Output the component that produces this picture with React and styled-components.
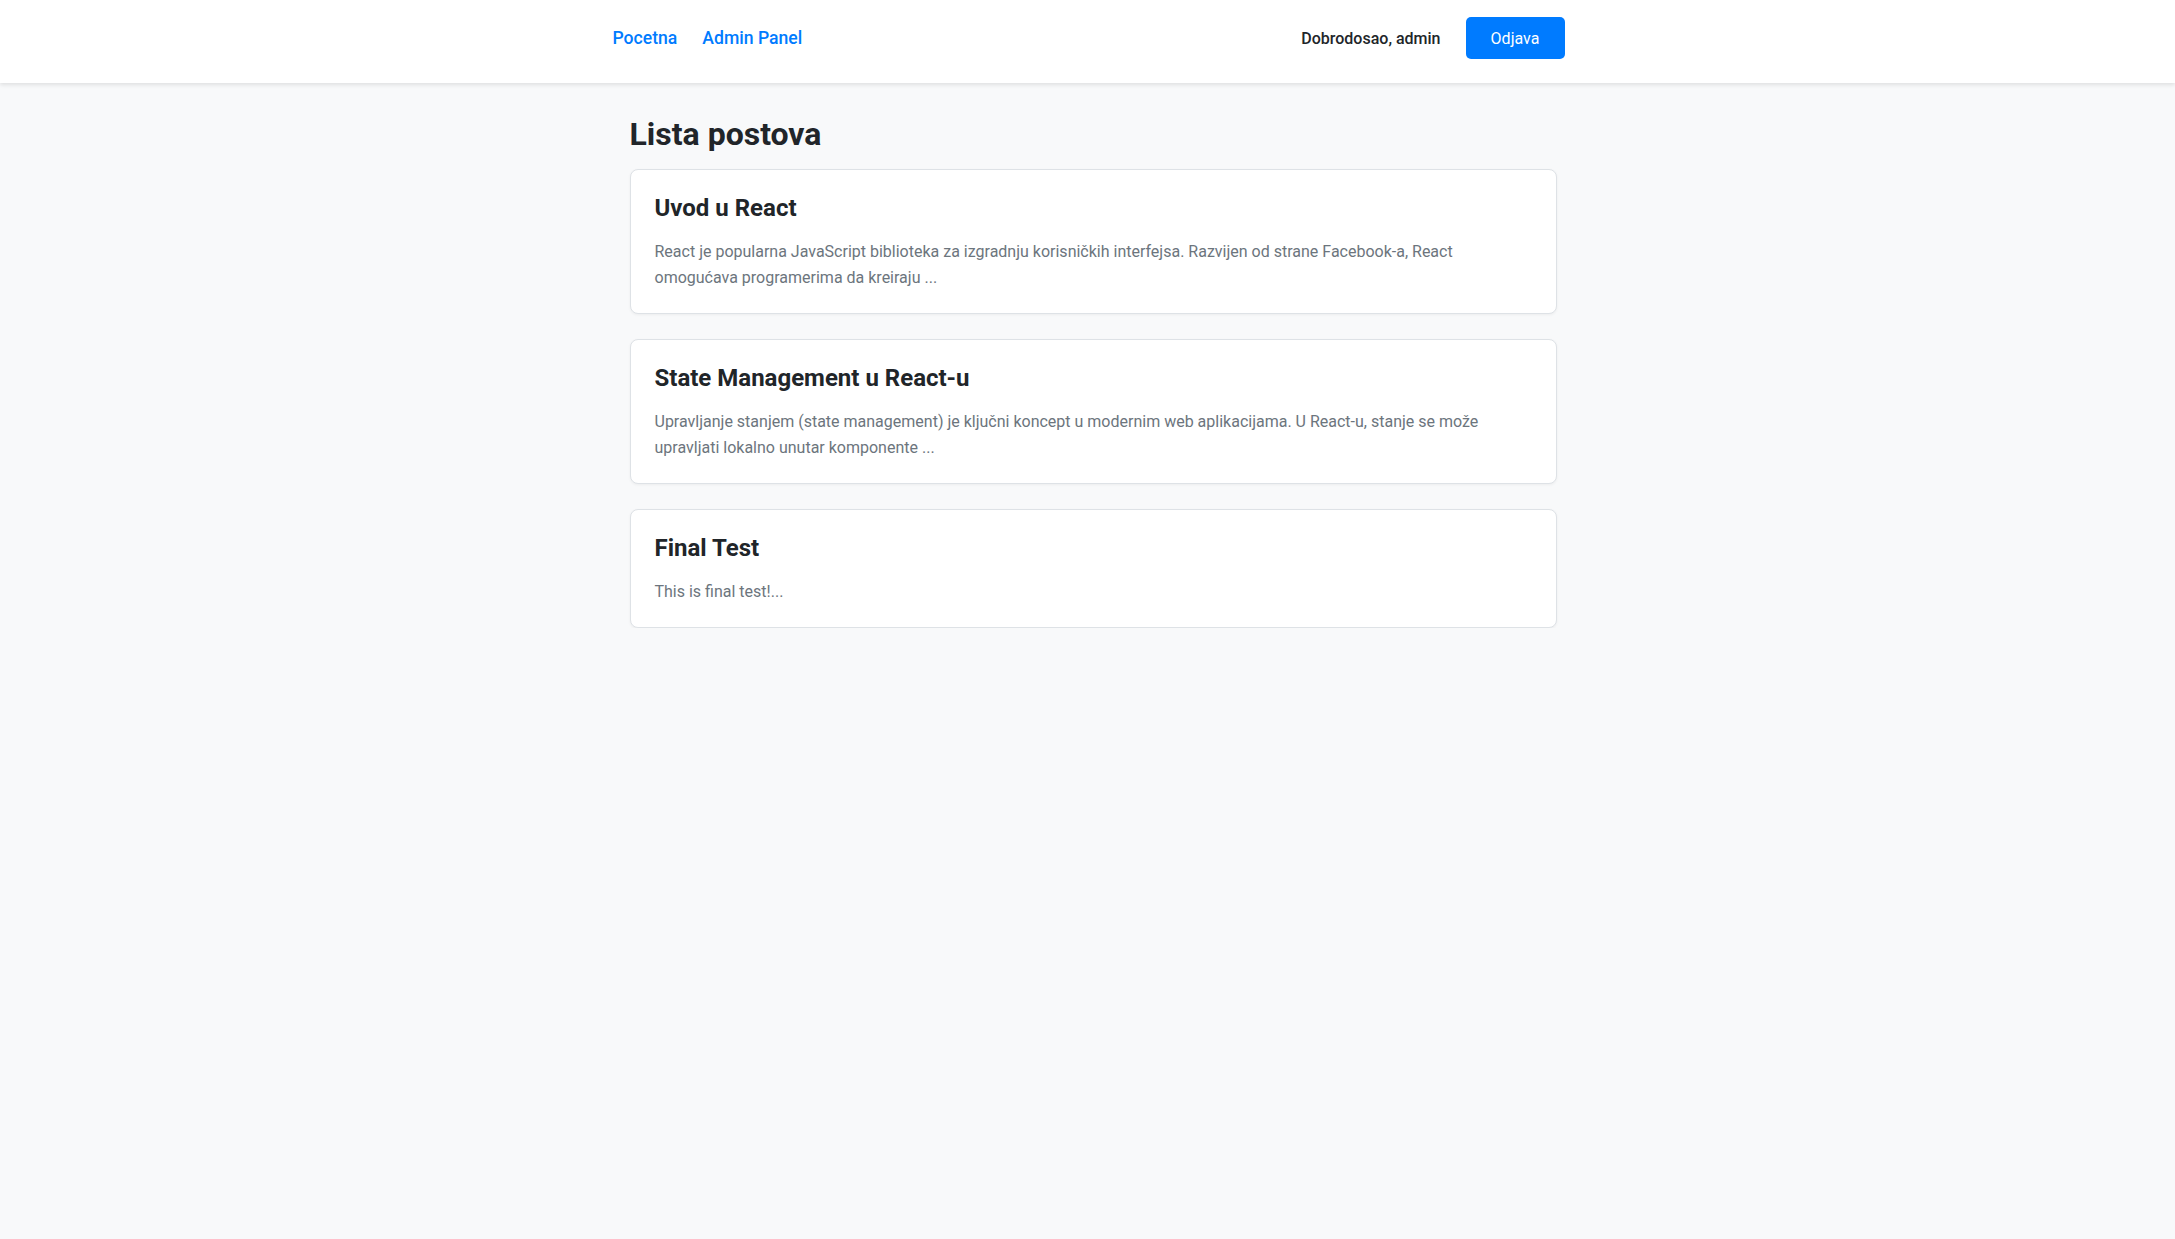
import React from "react";
import styled, { createGlobalStyle } from "styled-components";

const GlobalStyle = createGlobalStyle`
  html, body {
    margin: 0;
    padding: 0;
    background: #f8f9fa;
    font-family: Roboto, "Liberation Sans", Arial, sans-serif;
    color: #212529;
  }
  * { box-sizing: border-box; }
`;

const Header = styled.header`
  background: #ffffff;
  box-shadow: 0 2px 4px rgba(0, 0, 0, 0.1);
  height: 83px;
  padding-top: 17px;
`;

const HeaderInner = styled.div`
  width: 954px;
  margin: 0 auto;
  padding-left: 2px;
  display: flex;
  align-items: center;
  justify-content: space-between;
  height: 42px;
`;

const NavLinks = styled.nav`
  display: flex;
  align-items: center;
  gap: 25px;
`;

const NavLink = styled.a`
  color: #007bff;
  font-size: 17.6px;
  font-weight: 500;
  text-decoration: none;
  cursor: pointer;
`;

const UserArea = styled.div`
  display: flex;
  align-items: center;
  gap: 25px;
`;

const Welcome = styled.span`
  font-size: 16px;
  font-weight: 500;
  color: #212529;
`;

const LogoutButton = styled.button`
  height: 42px;
  width: 99px;
  padding: 0;
  border: none;
  border-radius: 5px;
  background: #007bff;
  color: #ffffff;
  font-family: inherit;
  font-size: 16px;
  cursor: pointer;
`;

const Main = styled.main`
  width: 938px;
  margin: 0 auto;
  padding: 32px 0 0 11px;
`;

const PageTitle = styled.h1`
  margin: 0 0 16px;
  font-size: 32px;
  line-height: 1.2;
  font-weight: 700;
  color: #212529;
`;

const PostList = styled.div`
  display: flex;
  flex-direction: column;
  gap: 25px;
`;

const Card = styled.article`
  background: #ffffff;
  border: 1px solid #dee2e6;
  border-radius: 8px;
  box-shadow: 0 1px 3px rgba(0, 0, 0, 0.05);
  padding: 24px 24px 22px;
`;

const CardTitle = styled.h2`
  margin: 0 0 16px;
  font-size: 24px;
  line-height: 1.2;
  font-weight: 700;
  color: #212529;
`;

const Excerpt = styled.p`
  margin: 0;
  font-size: 16px;
  line-height: 26px;
  color: #6c757d;
`;

const posts = [
  {
    title: "Uvod u React",
    excerpt:
      "React je popularna JavaScript biblioteka za izgradnju korisničkih interfejsa. Razvijen od strane Facebook-a, React omogućava programerima da kreiraju ...",
  },
  {
    title: "State Management u React-u",
    excerpt:
      "Upravljanje stanjem (state management) je ključni koncept u modernim web aplikacijama. U React-u, stanje se može upravljati lokalno unutar komponente ...",
  },
  {
    title: "Final Test",
    excerpt: "This is final test!...",
  },
];

export default function App() {
  return (
    <>
      <GlobalStyle />
      <Header>
        <HeaderInner>
          <NavLinks>
            <NavLink>Pocetna</NavLink>
            <NavLink>Admin Panel</NavLink>
          </NavLinks>
          <UserArea>
            <Welcome>Dobrodosao, admin</Welcome>
            <LogoutButton>Odjava</LogoutButton>
          </UserArea>
        </HeaderInner>
      </Header>
      <Main>
        <PageTitle>Lista postova</PageTitle>
        <PostList>
          {posts.map((p) => (
            <Card key={p.title}>
              <CardTitle>{p.title}</CardTitle>
              <Excerpt>{p.excerpt}</Excerpt>
            </Card>
          ))}
        </PostList>
      </Main>
    </>
  );
}
